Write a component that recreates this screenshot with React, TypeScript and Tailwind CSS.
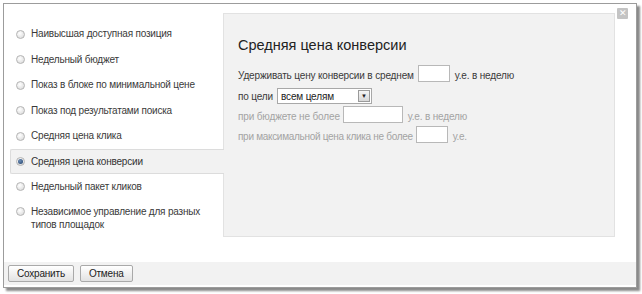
import React from "react";

const options = [
  "Наивысшая доступная позиция",
  "Недельный бюджет",
  "Показ в блоке по минимальной цене",
  "Показ под результатами поиска",
  "Средняя цена клика",
  "Средняя цена конверсии",
  "Недельный пакет кликов",
  "Независимое управление для разных типов площадок",
];

function Radio({ checked }: { checked?: boolean }) {
  return (
    <span className="relative mt-[1px] flex h-[9px] w-[9px] shrink-0 items-center justify-center rounded-full border border-[#b4b4b4] bg-[radial-gradient(circle_at_40%_35%,#ffffff,#d6d6d6)]">
      {checked && (
        <span className="h-[5px] w-[5px] rounded-full bg-[radial-gradient(circle_at_40%_35%,#6f8fb8,#1d3d66)]" />
      )}
    </span>
  );
}

function Input({ w }: { w: string }) {
  return <span className={`inline-block h-[17px] border border-[#b8b8b8] bg-white ${w}`} />;
}

export default function App() {
  return (
    <div
      className="h-[294px] w-[642px] bg-white pl-[3px] pt-[3px] text-[10px] tracking-[-0.2px] text-[#3a3a3a]"
      style={{ fontFamily: '"Liberation Sans", Arial, sans-serif' }}
    >
      <div className="relative flex h-[285px] w-[634px] flex-col border border-[#9c9c9c] bg-white shadow-[3px_3px_2px_#8a8a8a]">
        {/* close */}
        <span className="absolute right-[8px] top-[4px] flex h-[11px] w-[11px] items-center justify-center rounded-[1px] bg-[#c4c4c4] text-[9px] leading-none text-white">
          ✕
        </span>

        <div className="flex flex-1">
          <ul className="w-[219px] pl-[6px] pt-[17px]">
            {options.map((o, i) => {
              const sel = i === 5;
              return (
                <li
                  key={o}
                  className={
                    sel
                      ? "relative z-10 -mr-px flex h-[25px] items-center gap-[6px] rounded-l-[2px] border-y border-l border-[#dcdcdc] bg-[#f2f2f2] pl-[5px] text-[#333]"
                      : i === 7
                      ? "flex items-start gap-[6px] pl-[6px] pt-[7px] leading-[13px]"
                      : "flex h-[25.5px] items-center gap-[6px] pl-[6px]"
                  }
                >
                  <Radio checked={sel} />
                  <span className={i === 7 ? "-mt-[1px] w-[180px]" : ""}>{o}</span>
                </li>
              );
            })}
          </ul>

          <div className="mr-[21px] mt-[9px] h-[224px] flex-1 border border-[#e2e2e2] bg-[#f2f2f2] pl-[14px] pt-[23px] tracking-[-0.15px]">
            <h2 className="text-[14.5px] leading-[17px] tracking-normal text-[#222]">Средняя цена конверсии</h2>
            <div className="mt-[12px] flex h-[18px] items-center">
              <span>Удерживать цену конверсии в среднем</span>
              <span className="ml-[4px]">
                <Input w="w-[32px]" />
              </span>
              <span className="ml-[5px]">у.е. в неделю</span>
            </div>
            <div className="mt-[3px] flex h-[18px] items-center">
              <span>по цели</span>
              <span className="ml-[4px] flex h-[16px] w-[95px] items-center justify-between border border-[#a8a8a8] bg-white pl-[3px] pr-[1px] text-[#222]">
                <span>всем целям</span>
                <span className="flex h-[12px] w-[12px] items-center justify-center border border-[#9a9a9a] bg-[linear-gradient(#f6f6f6,#d8d8d8)] text-[6px] leading-none text-[#222]">
                  ▼
                </span>
              </span>
            </div>
            <div className="mt-[2px] flex h-[18px] items-center text-[#a3a3a3]">
              <span>при бюджете не более</span>
              <span className="ml-[3px]">
                <Input w="w-[60px]" />
              </span>
              <span className="ml-[5px]">у.е. в неделю</span>
            </div>
            <div className="mt-[2px] flex h-[18px] items-center tracking-[-0.3px] text-[#a3a3a3]">
              <span>при максимальной цена клика не более</span>
              <span className="ml-[3px]">
                <Input w="w-[32px]" />
              </span>
              <span className="ml-[5px]">у.е.</span>
            </div>
          </div>
        </div>

        <div className="mb-[2px] flex h-[23px] items-center gap-[6px] bg-[#f2f2f2] pl-[4px]">
          <button className="h-[17px] rounded-[2px] border border-[#a9a9a9] bg-[linear-gradient(#ffffff,#e2e2e2)] px-[8px] text-[10px] leading-none text-[#222]">
            Сохранить
          </button>
          <button className="h-[17px] rounded-[2px] border border-[#a9a9a9] bg-[linear-gradient(#ffffff,#e2e2e2)] px-[8px] text-[10px] leading-none text-[#222]">
            Отмена
          </button>
        </div>
      </div>
    </div>
  );
}
